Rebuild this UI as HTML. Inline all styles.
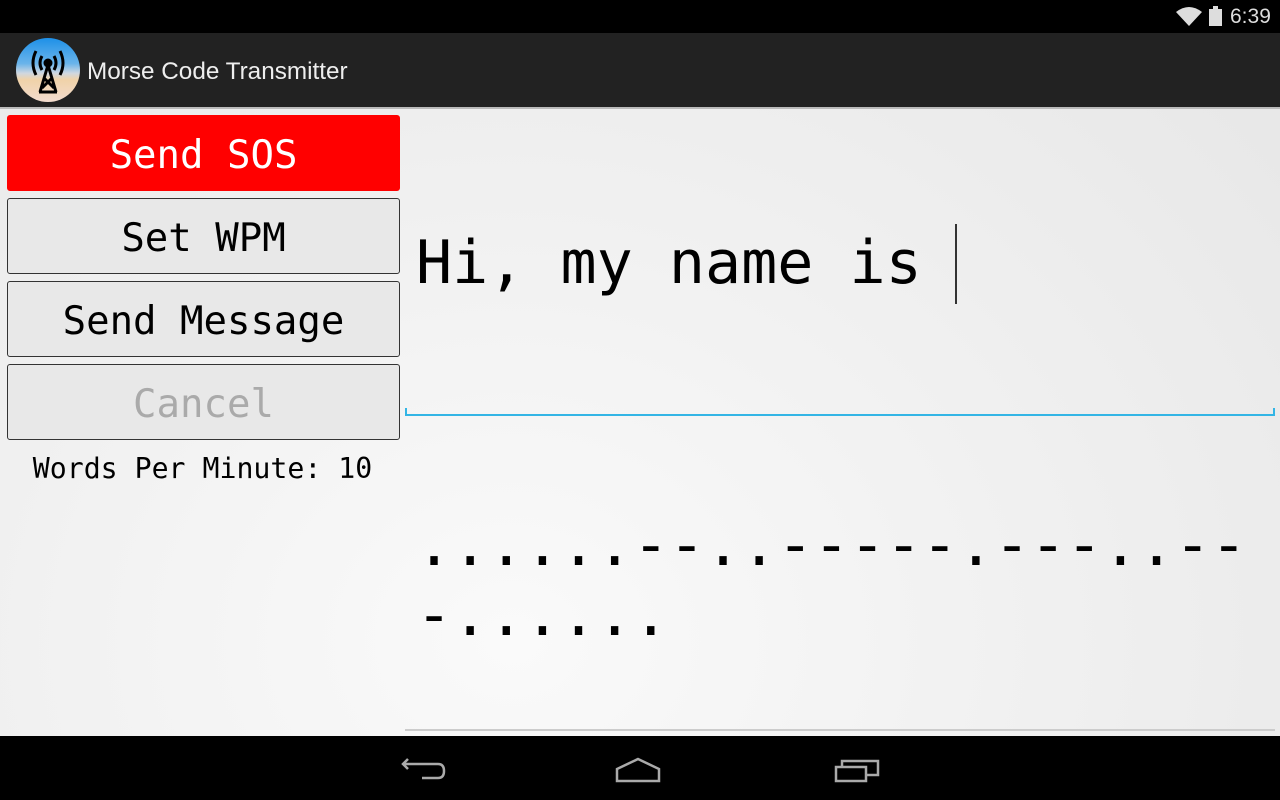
<!DOCTYPE html>
<html><head><style>
body{margin:0;width:1280px;height:800px;overflow:hidden;font-family:"Liberation Sans",sans-serif;position:relative;background:radial-gradient(ellipse at 40% 80%,#fafafa 0%,#f2f2f2 40%,#e6e6e6 100%);}
.abs{position:absolute}
.mono{font-family:"DejaVu Sans Mono","Liberation Mono",monospace}
.btn{position:absolute;left:7px;width:393px;height:76px;border:1px solid #333;border-radius:3px;background:#e8e8e8;box-sizing:border-box;text-align:center;line-height:80px;font-size:39px;color:#000}
</style></head><body>
<div class="abs" style="left:0;top:0;width:1280px;height:33px;background:#000"></div>
<svg class="abs" style="left:1176px;top:6px" width="26" height="20" viewBox="0 0 26 20"><path d="M0 6 Q13 -4 26 6 L13 20 Z" fill="#ddd"/></svg>
<div class="abs" style="left:1209px;top:9px;width:13px;height:17px;background:#ddd"></div>
<div class="abs" style="left:1213px;top:6px;width:5px;height:3px;background:#ddd"></div>
<div class="abs" style="left:1230px;top:5px;color:#ddd;font-size:21px">6:39</div>
<div class="abs" style="left:0;top:33px;width:1280px;height:74px;background:#222"></div>
<div class="abs" style="left:16px;top:38px;width:64px;height:64px;border-radius:50%;background:linear-gradient(#1e90e8 0%,#6ab4ea 40%,#cfd7e0 55%,#f0d2a8 65%,#f3dccf 100%)"></div>
<svg class="abs" style="left:16px;top:38px" width="64" height="64" viewBox="0 0 64 64" fill="none" stroke="#000" stroke-width="3"><circle cx="32" cy="25" r="3" fill="#000"/><path d="M32 27 L24 54 M32 27 L40 54 M23 54 H41 M28 40 L38 50 M36 40 L26 50"/><path d="M26 18 Q22 25 26 32 M38 18 Q42 25 38 32 M20 13 Q14 25 20 37 M44 13 Q50 25 44 37"/></svg>
<div class="abs" style="left:87px;top:58px;color:#eee;font-size:24.3px">Morse Code Transmitter</div>
<div class="abs" style="left:0;top:107px;width:1280px;height:2px;background:#bbb"></div>
<div class="btn mono" style="top:115px;background:#f00;border-color:#f00;color:#fff">Send SOS</div>
<div class="btn mono" style="top:198px">Set WPM</div>
<div class="btn mono" style="top:281px">Send Message</div>
<div class="btn mono" style="top:364px;color:#aaa">Cancel</div>
<div class="abs mono" style="left:0;width:405px;top:452px;text-align:center;font-size:28.2px">Words Per Minute: 10</div>
<div class="abs mono" style="left:416px;top:228px;font-size:60px;white-space:pre;letter-spacing:0px">Hi, my name is </div>
<div class="abs" style="left:955px;top:224px;width:2px;height:80px;background:#333"></div>
<div class="abs" style="left:405px;top:414px;width:870px;height:2px;background:#33b5e5"></div>
<div class="abs" style="left:405px;top:408px;width:2px;height:8px;background:#33b5e5"></div>
<div class="abs" style="left:1273px;top:408px;width:2px;height:8px;background:#33b5e5"></div>
<div class="abs mono" style="left:416px;top:510px;font-size:60px;line-height:70px;white-space:pre">......--..-----.---..--
-......</div>
<div class="abs" style="left:405px;top:729px;width:870px;height:2px;background:#ccc"></div>
<div class="abs" style="left:0;top:736px;width:1280px;height:64px;background:#000"></div>
<svg class="abs" style="left:400px;top:755px" width="480" height="30" fill="none" stroke="#aaa" stroke-width="2.5"><path d="M8 4 L3 9 L8 14 M3 9 H38 Q44 9 44 16 Q44 23 38 23 H22"/><path d="M217 26 V14 L238 4 L259 14 V26 Z"/><path d="M436 12 H466 V26 H436 Z M442 12 V6 H478 V20 H466"/></svg>
</body></html>
